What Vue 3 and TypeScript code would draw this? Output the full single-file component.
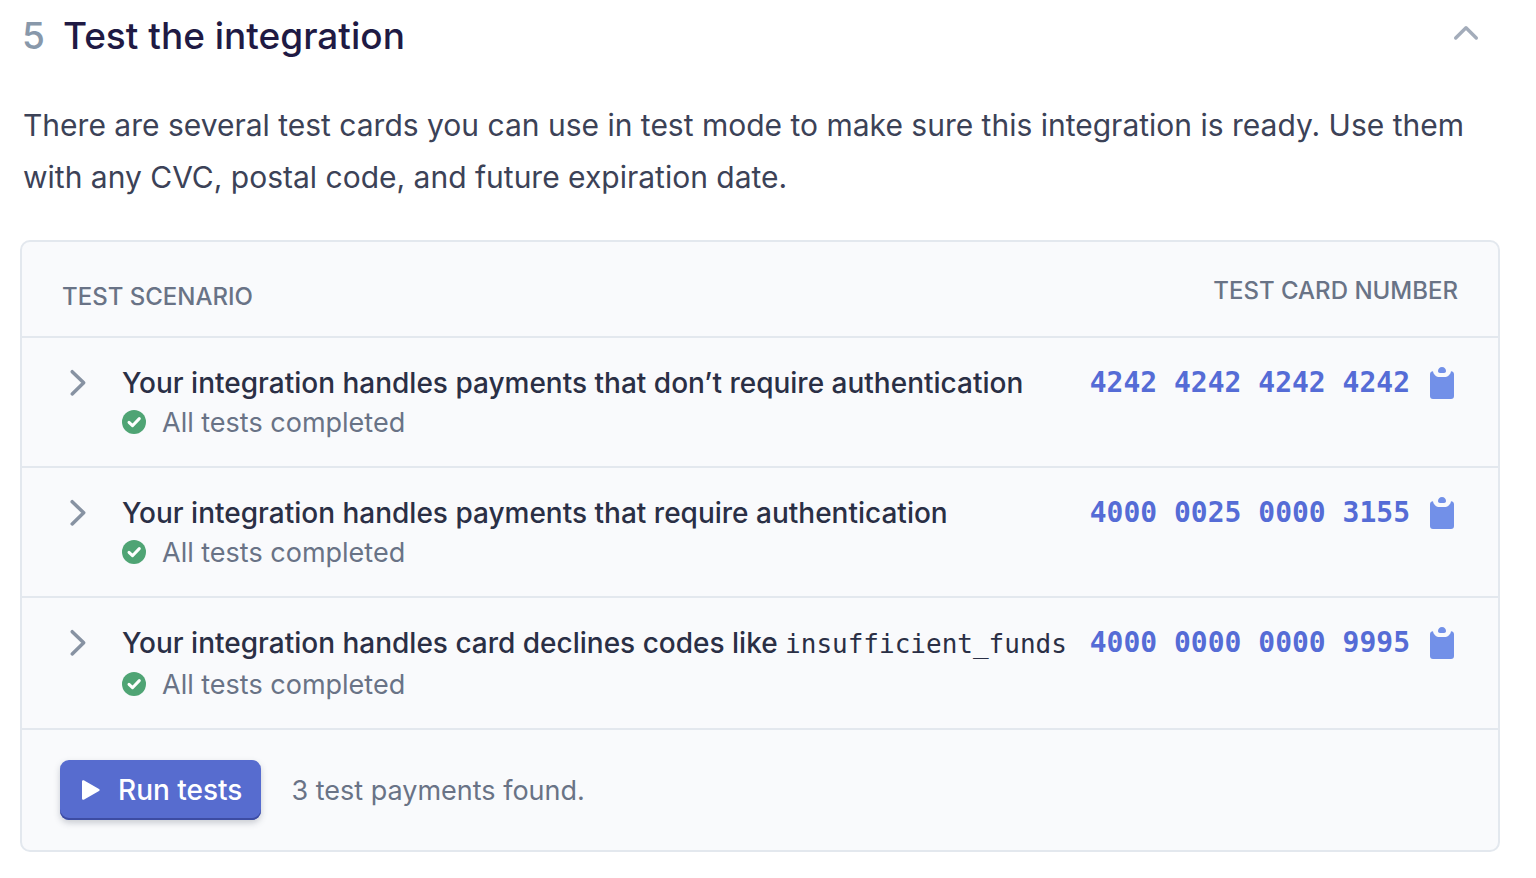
<script setup lang="ts">
import { ref } from 'vue'

interface Scenario {
  title: string
  code?: string
  status: string
  card: string
}

const open = ref(true)

const scenarios: Scenario[] = [
  {
    title: 'Your integration handles payments that don’t require authentication',
    status: 'All tests completed',
    card: '4242 4242 4242 4242',
  },
  {
    title: 'Your integration handles payments that require authentication',
    status: 'All tests completed',
    card: '4000 0025 0000 3155',
  },
  {
    title: 'Your integration handles card declines codes like',
    code: 'insufficient_funds',
    status: 'All tests completed',
    card: '4000 0000 0000 9995',
  },
]

function copyCard(card: string): void {
  void navigator.clipboard?.writeText(card)
}
</script>

<template>
  <section class="step">
    <header class="step-header">
      <h2 class="step-title"><span class="step-number">5</span>Test the integration</h2>
      <button class="collapse" type="button" aria-label="Toggle step" :aria-expanded="open" @click="open = !open">
        <svg width="26" height="16" viewBox="0 0 26 16" fill="none" stroke="#a3acba" stroke-width="3.400" stroke-linecap="round" stroke-linejoin="round">
          <path d="M2.700 13 13 2.700 23.300 13" />
        </svg>
      </button>
    </header>

    <template v-if="open">
      <p class="intro">
        There are several test cards you can use in test mode to make sure this integration is ready. Use them with any
        CVC, postal code, and future expiration date.
      </p>

      <div class="panel">
        <table class="scenarios">
          <thead>
            <tr>
              <th class="head-scenario" scope="col" colspan="2">TEST SCENARIO</th>
              <th class="head-card" scope="col">TEST CARD NUMBER</th>
            </tr>
          </thead>
          <tbody>
            <tr v-for="s in scenarios" :key="s.card">
              <td class="cell-toggle">
                <button class="toggle" type="button" :aria-label="`Show details: ${s.title}`">
                  <svg width="18" height="28" viewBox="0 0 18 28" fill="none" stroke="#8792a2" stroke-width="3.500" stroke-linecap="round" stroke-linejoin="round">
                    <path d="M3.200 2.700 14.700 13.800 3.200 24.900" />
                  </svg>
                </button>
              </td>
              <td class="cell-scenario">
                <div class="title" :class="{ 'with-code': s.code }">{{ s.title }}<template v-if="s.code">{{ ' ' }}<code>{{ s.code }}</code></template></div>
                <div class="status">
                  <svg width="24" height="24" viewBox="0 0 24 24" fill="none">
                    <circle cx="12" cy="12" r="12" fill="#4fa474" />
                    <path d="M7 12.300 10.500 15.700 17.300 8.600" stroke="#fff" stroke-width="3" stroke-linecap="round" stroke-linejoin="round" />
                  </svg>
                  <span>{{ s.status }}</span>
                </div>
              </td>
              <td class="cell-card">
                <button class="card-number" type="button" @click="copyCard(s.card)">
                  <span>{{ s.card }}</span>
                  <svg width="24" height="32" viewBox="0 0 24 32" fill="#7290e8">
                    <path d="M3 4.200C1.300 4.200 0 5.500 0 7.200V29a3 3 0 0 0 3 3h18a3 3 0 0 0 3-3V7.200c0-1.700-1.300-3-3-3C20.500 7.700 17.500 10 14.500 10h-5C6.500 10 3.500 7.700 3 4.200z" />
                    <path d="M8 4C8 1.700 9.700 0 12 0s4 1.700 4 4c0 1.300-.8 2-2 2h-4c-1.200 0-2-.7-2-2z" />
                  </svg>
                </button>
              </td>
            </tr>
          </tbody>
        </table>

        <footer class="panel-footer">
          <button class="run" type="button">
            <svg width="18" height="20" viewBox="0 0 18 20" fill="#fff">
              <path d="M0 1.500C0 .3 1.200-.2 2.200.4l14.800 8.600c.9.500.9 1.500 0 2L2.200 19.600c-1 .6-2.200.1-2.200-1.100z" />
            </svg>
            <span>Run tests</span>
          </button>
          <p class="found">3 test payments found.</p>
        </footer>
      </div>
    </template>
  </section>
</template>

<style>
body {
  margin: 0;
  background: #fff;
}
</style>

<style scoped>
.step {
  padding: 12px 36px 24px 20px;
  font-family: Inter, 'Liberation Sans', sans-serif;
  color: #3c4257;
}

button {
  margin: 0;
  padding: 0;
  border: 0;
  background: none;
  font: inherit;
  color: inherit;
  cursor: pointer;
}

svg {
  display: block;
  flex: none;
}

.step-header {
  display: flex;
  justify-content: space-between;
  align-items: flex-start;
  padding: 0 20px 0 2px;
}

.step-title {
  display: flex;
  gap: 18px;
  margin: 0;
  font-size: 37px;
  line-height: 48px;
  font-weight: 500;
  color: #1f1a44;
}

.step-number {
  color: #8898aa;
}

.collapse {
  padding: 13px 1px;
}

.intro {
  margin: 39px 0 37px;
  padding-left: 3px;
  font-size: 30px;
  line-height: 52px;
}

.panel {
  border: 2px solid #e3e8ee;
  border-radius: 10px;
  background: #f9fafc;
}

.scenarios {
  width: 100%;
  border-collapse: separate;
  border-spacing: 0;
}

th,
td {
  padding: 0;
  border-bottom: 2px solid #e3e8ee;
  text-align: left;
  vertical-align: top;
}

th {
  font-size: 24px;
  line-height: 32px;
  font-weight: 500;
  color: #697386;
}

.head-scenario {
  padding: 39px 0 23px 40px;
}

.head-card {
  padding: 33px 40px 29px 0;
  text-align: right;
}

td {
  padding: 25px 0 23px;
}

.cell-toggle {
  width: 100px;
}

.toggle {
  margin-left: 47px;
  padding: 6px 0 8px;
}

.title {
  font-size: 28px;
  line-height: 40px;
  font-weight: 500;
  color: #2a2f45;
  white-space: nowrap;
}

.title.with-code {
  margin-bottom: 1px;
}

.title code {
  font-family: 'DejaVu Sans Mono', monospace;
  font-size: 26px;
  font-weight: 400;
}

.status {
  display: flex;
  align-items: center;
  gap: 16px;
  font-size: 27px;
  line-height: 40px;
  color: #697386;
}

.status svg {
  margin-bottom: 2px;
}

.cell-card {
  padding-right: 44px;
}

.card-number {
  display: flex;
  align-items: center;
  gap: 20px;
  margin-left: auto;
  font-family: 'DejaVu Sans Mono', monospace;
  font-size: 28px;
  line-height: 40px;
  font-weight: 700;
  color: #556cd6;
  white-space: nowrap;
}

.panel-footer {
  display: flex;
  align-items: center;
  gap: 30px;
  padding: 30px 38px;
  line-height: 40px;
}

.run {
  display: flex;
  align-items: center;
  gap: 18px;
  padding: 10px 19px 10px 22px;
  border-radius: 9px;
  background: #576ccf;
  box-shadow: inset 0 -2px 0 #3d4ca3, 0 3px 6px rgba(60, 66, 87, 0.25);
  font-size: 28px;
  font-weight: 500;
  color: #fff;
}

.found {
  margin: 0;
  padding-top: 2px;
  font-size: 27px;
  color: #697386;
}
</style>
